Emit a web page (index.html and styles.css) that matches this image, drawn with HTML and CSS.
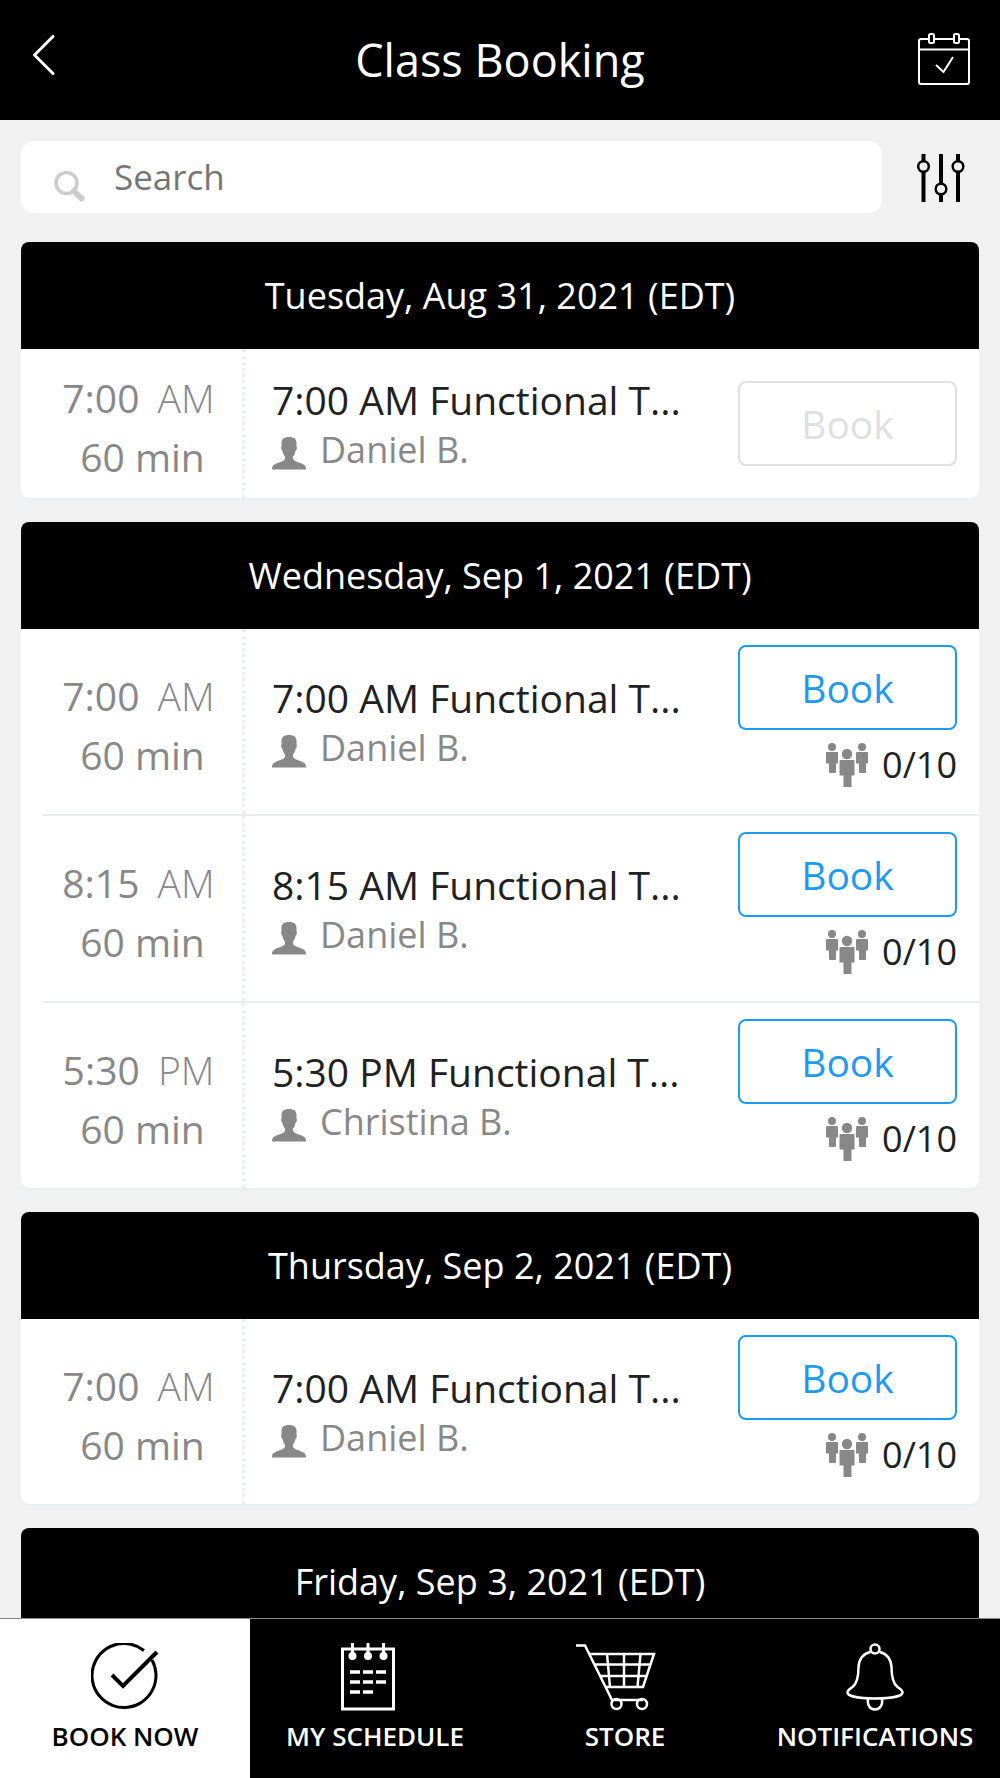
FILE: index.html
```html
<!DOCTYPE html>
<html lang="en">
<head>
    <meta charset="UTF-8">
    <meta name="viewport" content="width=device-width, initial-scale=1.0">
    <title>Class Booking</title>
    <link rel="stylesheet" href="styles.css">
</head>
<body>
    <!-- shared icons -->
    <svg class="sprite" aria-hidden="true">
        <symbol id="icon-user" viewBox="0 0 34 33">
            <path d="M17 0C12 0 9.500 2 9.500 6v3.500c-.8 1-.3 3.500 1 4.500.5 2.500 1.300 4.500 2.500 5.500v2.500C11.500 24.500 7.500 25 3.500 27 .8 28.300 0 29.500 0 32.500h34c0-3-.8-4.200-3.500-5.500C26.500 25 22.500 24.500 21 22v-2.500c1.200-1 2-3 2.500-5.500 1.300-1 1.800-3.500 1-4.500V6C24.500 2 22 0 17 0z"/>
        </symbol>
        <symbol id="icon-group" viewBox="0 0 42 44">
            <circle cx="6" cy="4" r="4"/>
            <path d="M1 9h10q1 0 1 1v10.500h-2V29q0 1-1 1H4q-1 0-1-1v-8.500H0V10q0-1 1-1z"/>
            <circle cx="36" cy="4" r="4"/>
            <path d="M31 9h10q1 0 1 1v10.500h-2V29q0 1-1 1h-5q-1 0-1-1v-8.500h-3V10q0-1 1-1z"/>
            <circle cx="21" cy="11" r="5.200"/>
            <path d="M14.500 17h13q1 0 1 1v14.500H25.500V44h-8V32.500h-4V18q0-1 1-1z"/>
        </symbol>
    </svg>

    <div class="app">
        <header class="top-bar">
            <button type="button" class="icon-btn back" aria-label="Back">
                <svg width="22" height="40" viewBox="0 0 22 40"><path d="M20 1.500L1.500 20 20 38.500"/></svg>
            </button>
            <h1>Class Booking</h1>
            <button type="button" class="icon-btn calendar" aria-label="My bookings">
                <svg width="52" height="52" viewBox="0 0 52 52">
                    <path d="M11 6H3Q1 6 1 8v41q0 2 2 2h46q2 0 2-2V8q0-2-2-2h-7M16 6h20M1 16.500h50"/>
                    <rect x="11" y="1" width="5" height="9" rx="1.500"/>
                    <rect x="36" y="1" width="5" height="9" rx="1.500"/>
                    <path d="M18 32l7.500 7L35 24"/>
                </svg>
            </button>
        </header>

        <main class="content">
            <form class="search-row" role="search">
                <div class="search-box">
                    <label for="search" aria-label="Search">
                        <svg width="32" height="31" viewBox="0 0 32 31">
                            <circle cx="12.500" cy="12" r="10.500" fill="none" stroke-width="3.500"/>
                            <path d="M20 20l7.500 7.500" stroke-width="6" stroke-linecap="round"/>
                        </svg>
                    </label>
                    <input type="text" id="search" name="search" placeholder="Search">
                </div>
                <button type="button" class="icon-btn filter" aria-label="Filter">
                    <svg width="48" height="48" viewBox="0 0 48 48">
                        <path d="M6.500 0v7M6.500 18v30M24 0v29M24 41v7M41 0v7M41 18v30" stroke-width="4"/>
                        <circle cx="6.500" cy="12.500" r="5.300" stroke-width="2.500"/>
                        <circle cx="24" cy="35" r="5.300" stroke-width="2.500"/>
                        <circle cx="41" cy="12.500" r="5.300" stroke-width="2.500"/>
                    </svg>
                </button>
            </form>

            <section class="day">
                <h2>Tuesday, Aug 31, 2021 (EDT)</h2>
                <div class="class-row">
                    <div class="time">
                        <p class="start">7:00 <span>AM</span></p>
                        <p>60 min</p>
                    </div>
                    <div class="info">
                        <h3>7:00 AM Functional T...</h3>
                        <p><svg width="34" height="33"><use href="#icon-user"/></svg>Daniel B.</p>
                    </div>
                    <div class="action closed">
                        <button type="button" class="book" disabled>Book</button>
                    </div>
                </div>
            </section>

            <section class="day">
                <h2>Wednesday, Sep 1, 2021 (EDT)</h2>
                <div class="class-row">
                    <div class="time">
                        <p class="start">7:00 <span>AM</span></p>
                        <p>60 min</p>
                    </div>
                    <div class="info">
                        <h3>7:00 AM Functional T...</h3>
                        <p><svg width="34" height="33"><use href="#icon-user"/></svg>Daniel B.</p>
                    </div>
                    <div class="action">
                        <button type="button" class="book">Book</button>
                        <p class="spots"><svg width="42" height="44"><use href="#icon-group"/></svg>0/10</p>
                    </div>
                </div>
                <div class="class-row">
                    <div class="time">
                        <p class="start">8:15 <span>AM</span></p>
                        <p>60 min</p>
                    </div>
                    <div class="info">
                        <h3>8:15 AM Functional T...</h3>
                        <p><svg width="34" height="33"><use href="#icon-user"/></svg>Daniel B.</p>
                    </div>
                    <div class="action">
                        <button type="button" class="book">Book</button>
                        <p class="spots"><svg width="42" height="44"><use href="#icon-group"/></svg>0/10</p>
                    </div>
                </div>
                <div class="class-row">
                    <div class="time">
                        <p class="start">5:30 <span>PM</span></p>
                        <p>60 min</p>
                    </div>
                    <div class="info">
                        <h3>5:30 PM Functional T...</h3>
                        <p><svg width="34" height="33"><use href="#icon-user"/></svg>Christina B.</p>
                    </div>
                    <div class="action">
                        <button type="button" class="book">Book</button>
                        <p class="spots"><svg width="42" height="44"><use href="#icon-group"/></svg>0/10</p>
                    </div>
                </div>
            </section>

            <section class="day">
                <h2>Thursday, Sep 2, 2021 (EDT)</h2>
                <div class="class-row">
                    <div class="time">
                        <p class="start">7:00 <span>AM</span></p>
                        <p>60 min</p>
                    </div>
                    <div class="info">
                        <h3>7:00 AM Functional T...</h3>
                        <p><svg width="34" height="33"><use href="#icon-user"/></svg>Daniel B.</p>
                    </div>
                    <div class="action">
                        <button type="button" class="book">Book</button>
                        <p class="spots"><svg width="42" height="44"><use href="#icon-group"/></svg>0/10</p>
                    </div>
                </div>
            </section>

            <section class="day">
                <h2>Friday, Sep 3, 2021 (EDT)</h2>
            </section>
        </main>

        <nav class="tab-bar">
            <a href="#book" class="active">
                <svg width="68" height="68" viewBox="0 0 68 68" stroke-width="3">
                    <path d="M53 7.500A32 32 0 1 0 61 17"/>
                    <path d="M21 32l11 11L66 9" stroke-width="4"/>
                </svg>
                BOOK NOW
            </a>
            <a href="#schedule">
                <svg width="68" height="68" viewBox="0 0 68 68">
                    <path d="M1.500 6h51v60h-51z" stroke-width="3"/>
                    <path d="M11.500 0v12M27 0v12M42.500 0v12" stroke-width="3"/>
                    <path d="M9 29h10M22 29h10M35 29h10M9 39h10M22 39h10M35 39h10M9 49h10M22 49h10" stroke-width="3.500"/>
                    <g fill="#fff" stroke="none"><circle cx="11.500" cy="13" r="4"/><circle cx="27" cy="13" r="4"/><circle cx="42.500" cy="13" r="4"/></g>
                </svg>
                MY SCHEDULE
            </a>
            <a href="#store">
                <svg width="98" height="68" viewBox="0 0 98 68" stroke-width="2.500">
                    <path d="M0 2.500h9L36 57h31M13 11h65L67 44H30M18 21.500h57M24 33h47"/>
                    <path d="M31 11l3 33M48 11v33M64.500 11l-3 33"/>
                    <circle cx="40.500" cy="61" r="5"/>
                    <circle cx="66" cy="61" r="5"/>
                </svg>
                STORE
            </a>
            <a href="#notifications">
                <svg width="58" height="68" viewBox="0 0 58 68" stroke-width="2.500">
                    <circle cx="29" cy="6" r="4.500"/>
                    <path d="M24.500 9C16 11 13 17 12.500 24c0 10-2 17-6 20C4 46 1.500 47 1.500 49.500 1.500 53 12 55.500 29 55.500S56.500 53 56.500 49.500c0-2.500-2.500-3.500-5-5.500-4-3-6-10-6-20C45 17 42 11 33.500 9"/>
                    <path d="M22 56c-1 6 2 10.500 7 10.500S37 62 36 56"/>
                </svg>
                NOTIFICATIONS
            </a>
        </nav>
    </div>
</body>
</html>
```
FILE: styles.css
```css
* { box-sizing: border-box; }
body { font-family: "Open Sans", "Noto Sans", sans-serif; background-color: #f1f1f1; color: #212121; margin: 0; }
h1, h2, h3, p { margin: 0; font-weight: 400; }
button, input { font-family: inherit; }
svg { flex: none; }
.sprite { display: none; }
.app { display: flex; flex-direction: column; height: 100vh; }

/* header */
.top-bar { display: flex; align-items: center; justify-content: space-between; height: 120px; padding: 0 30px; background: #000; color: #fff; flex: none; }
.top-bar h1 { font-size: 45px; line-height: 60px; }
.icon-btn { display: flex; padding: 0; border: none; background: none; cursor: pointer; }
.icon-btn svg { fill: none; stroke: #fff; stroke-width: 2; }
.calendar { margin-bottom: 2px; }
.back { width: 52px; margin-bottom: 10px; padding-left: 3px; }
.back svg { stroke-width: 3; stroke-linecap: round; }

/* search */
.content { flex: 1; min-height: 0; padding: 21px 21px 0; overflow-y: auto; scrollbar-width: none; }
.search-row { display: flex; align-items: center; gap: 35px; margin-bottom: 29px; }
.search-box { display: flex; align-items: center; flex: 1; height: 72px; padding: 0 30px 0 33px; background: #fff; border-radius: 13px; }
.search-box label { display: flex; padding-top: 18px; }
.search-box svg { stroke: #ccc; }
.search-box input { flex: 1; min-width: 0; height: 72px; padding: 0 0 2px 28px; border: none; outline: none; background: none; font-size: 35px; color: #212121; }
.search-box input::placeholder { color: #757575; opacity: 1; }
.filter { margin-right: 14px; padding-top: 2px; }
.filter svg { stroke: #000; }

/* day cards */
.day { margin-bottom: 24px; background: #fff; border-radius: 8px; box-shadow: 0 2px 0 #e9eef2; overflow: hidden; }
.day h2 { background: #000; color: #fff; font-size: 36px; line-height: 107px; text-align: center; }
.class-row { display: flex; margin-left: 22px; }
.class-row + .class-row { border-top: 2px solid #e9eef2; }
.time, .info { display: flex; flex-direction: column; justify-content: center; }
.time { width: 202px; padding-top: 7px; border-right: 3px dotted #e9eef2; color: #888; font-size: 39px; line-height: 59px; text-align: center; }
.time .start { padding-right: 8px; }
.time span { margin-left: 8px; font-weight: 300; }
.info { flex: 1; min-width: 0; padding: 0 27px; }
.info h3 { font-size: 39px; line-height: 52px; white-space: nowrap; }
.info p { display: flex; align-items: center; gap: 14px; color: #888; font-size: 36px; line-height: 48px; }
.info svg { margin-top: 8px; fill: #888; }
.action { width: 241px; padding: 16px 22px 24px 0; }
.action.closed { padding: 32px 22px 32px 0; }
.book { display: block; width: 100%; height: 85px; padding: 0; background: #fff; border: 2px solid #1e9bf0; border-radius: 8px; color: #1e9bf0; font-size: 39px; cursor: pointer; }
.book:disabled { border-color: #e0e0e0; color: #e0e0e0; cursor: default; }
.spots { display: flex; justify-content: flex-end; align-items: center; gap: 14px; margin-top: 10px; font-size: 36px; line-height: 50px; }
.spots svg { fill: #888; }

/* bottom tabs */
.tab-bar { display: grid; grid-template-columns: repeat(4, 1fr); height: 160px; border-top: 1px solid #888; background: #000; flex: none; }
.tab-bar a { display: flex; flex-direction: column; align-items: center; gap: 7px; padding-top: 24px; color: #fff; font-size: 26px; font-weight: 600; line-height: 36px; text-decoration: none; }
.tab-bar svg { fill: none; stroke: #fff; }
.tab-bar .active { background: #fff; color: #000; }
.tab-bar .active svg { stroke: #000; }
```
